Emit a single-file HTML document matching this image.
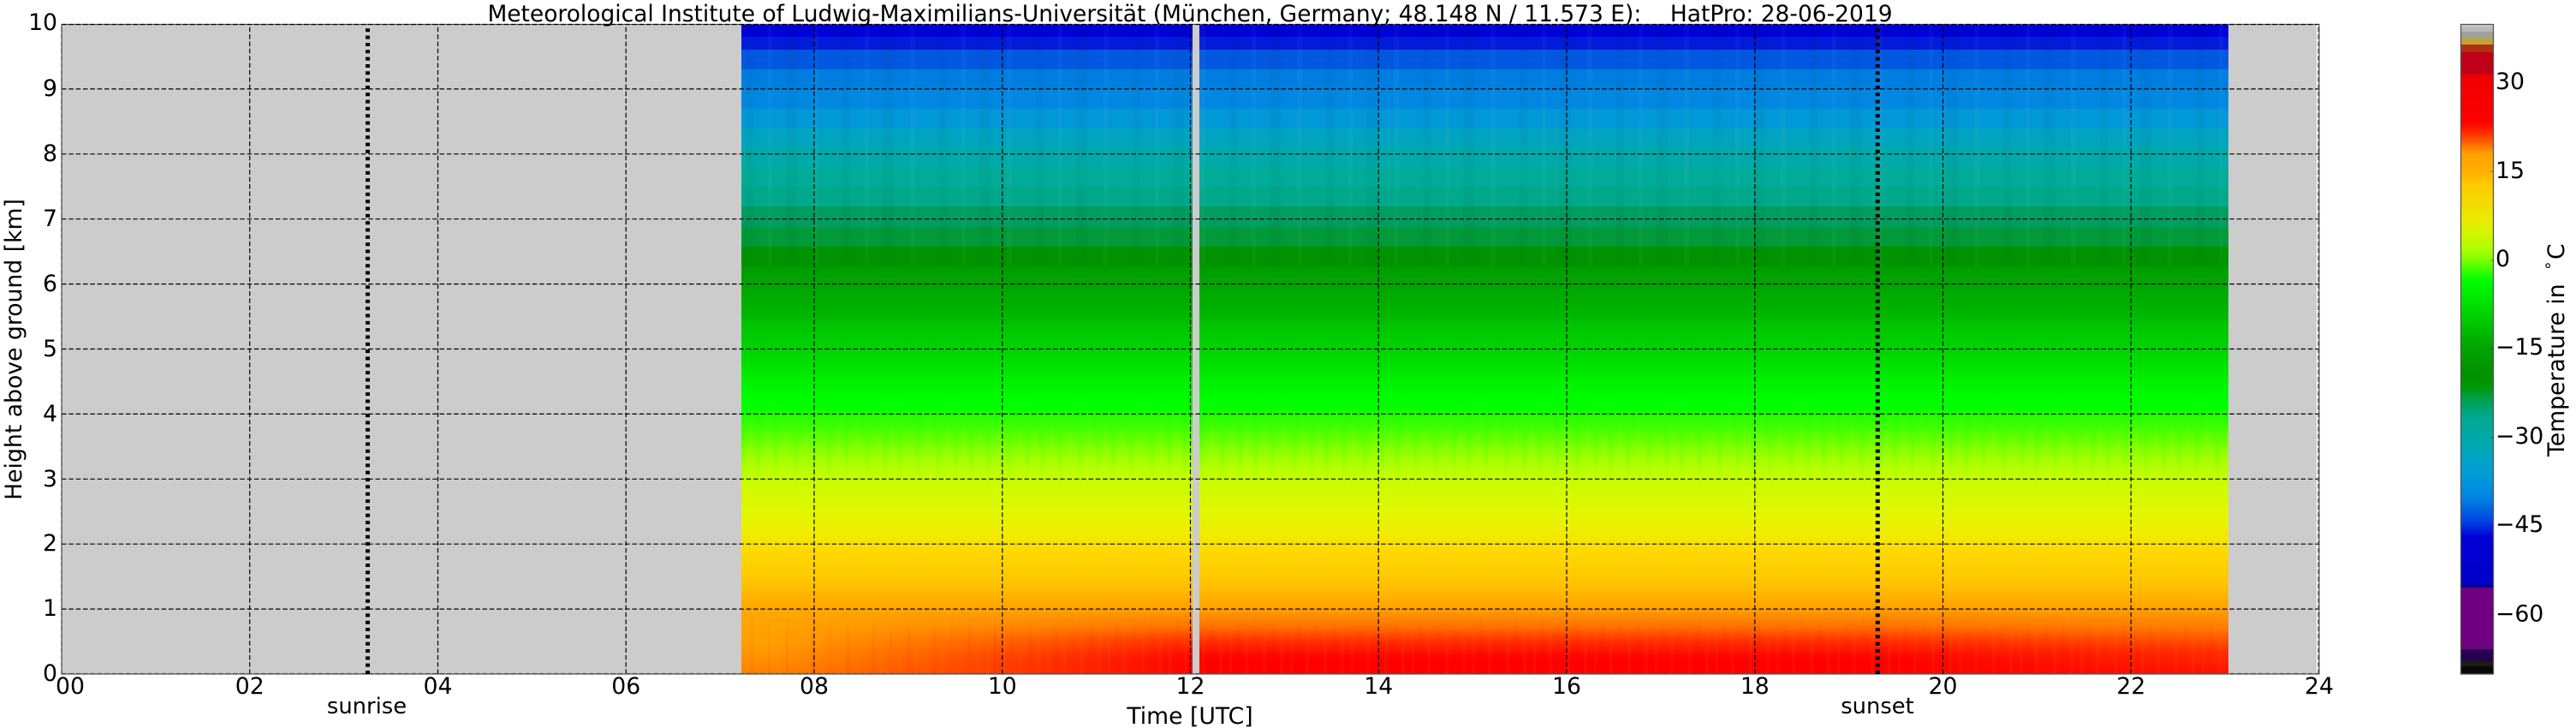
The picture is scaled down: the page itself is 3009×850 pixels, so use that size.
<!DOCTYPE html>
<html lang="en">
<head>
<meta charset="utf-8">
<title>HatPro 28-06-2019</title>
<style>
html,body{margin:0;padding:0;background:#fff;width:3009px;height:850px;overflow:hidden}
svg{display:block}
text{font-family:"DejaVu Sans",sans-serif;font-size:26.67px;fill:#000}
</style>
</head>
<body>
<svg xmlns="http://www.w3.org/2000/svg" width="3009" height="850" viewBox="0 0 3009 850">
<defs>
<linearGradient id="main" gradientUnits="userSpaceOnUse" x1="0" y1="0" x2="0" y2="1000">
<stop offset=".311" stop-color="#009c00"/><stop offset=".34" stop-color="#00a800"/><stop offset=".371" stop-color="#00b800"/><stop offset=".38" stop-color="#00c400"/><stop offset=".409" stop-color="#00d400"/><stop offset=".425" stop-color="#00e000"/><stop offset=".445" stop-color="#00f000"/><stop offset=".46" stop-color="#00fa00"/><stop offset=".475" stop-color="#00ff00"/><stop offset=".485" stop-color="#20ff00"/><stop offset=".499" stop-color="#40ff00"/><stop offset=".511" stop-color="#60ff00"/><stop offset=".522" stop-color="#80ff00"/><stop offset=".535" stop-color="#a0ff00"/><stop offset=".551" stop-color="#bcff00"/><stop offset=".565" stop-color="#ccfb00"/><stop offset=".598" stop-color="#e0f800"/><stop offset=".621" stop-color="#eeee00"/><stop offset=".641" stop-color="#fcdc00"/><stop offset=".681" stop-color="#ffc400"/><stop offset=".695" stop-color="#ffb400"/><stop offset=".711" stop-color="#ffa000"/><stop offset=".732" stop-color="#ff7000"/><stop offset=".748" stop-color="#ff3000"/><stop offset=".765" stop-color="#ff0800"/><stop offset=".772" stop-color="#ff0000"/><stop offset=".787" stop-color="#ff0000"/>
</linearGradient>
<linearGradient id="gl" gradientUnits="userSpaceOnUse" x1="0" y1="695" x2="0" y2="787">
<stop offset="0" stop-color="#ffb400"/><stop offset=".17" stop-color="#ffa800"/><stop offset=".6" stop-color="#ffa000"/><stop offset=".82" stop-color="#ff9000"/><stop offset="1" stop-color="#ff8000"/>
</linearGradient>
<linearGradient id="gr" gradientUnits="userSpaceOnUse" x1="0" y1="695" x2="0" y2="787">
<stop offset="0" stop-color="#ffb400"/><stop offset=".17" stop-color="#ffa200"/><stop offset=".43" stop-color="#ff7800"/><stop offset=".71" stop-color="#ff3000"/><stop offset="1" stop-color="#ff1000"/>
</linearGradient>
<linearGradient id="fl" gradientUnits="userSpaceOnUse" x1="900" y1="0" x2="1400" y2="0"><stop offset="0" stop-color="#fff"/><stop offset="1" stop-color="#000"/></linearGradient>
<linearGradient id="fr" gradientUnits="userSpaceOnUse" x1="2603" y1="0" x2="2200" y2="0"><stop offset="0" stop-color="#fff"/><stop offset="1" stop-color="#000"/></linearGradient>
<linearGradient id="vb" gradientUnits="userSpaceOnUse" x1="0" y1="715" x2="0" y2="787"><stop offset="0" stop-color="#000"/><stop offset=".4" stop-color="#fff"/><stop offset="1" stop-color="#fff"/></linearGradient>
<linearGradient id="vl" gradientUnits="userSpaceOnUse" x1="0" y1="480" x2="0" y2="565"><stop offset="0" stop-color="#000"/><stop offset=".35" stop-color="#fff"/><stop offset=".65" stop-color="#fff"/><stop offset="1" stop-color="#000"/></linearGradient>
<mask id="ml" maskUnits="userSpaceOnUse" x="866" y="695" width="540" height="92"><rect x="866" y="695" width="540" height="92" fill="url(#fl)"/></mask>
<mask id="mr" maskUnits="userSpaceOnUse" x="2150" y="695" width="453" height="92"><rect x="2150" y="695" width="453" height="92" fill="url(#fr)"/></mask>
<mask id="mb" maskUnits="userSpaceOnUse" x="866" y="715" width="1737" height="72"><rect x="866" y="715" width="1737" height="72" fill="url(#vb)"/></mask>
<mask id="mg" maskUnits="userSpaceOnUse" x="866" y="480" width="1737" height="85"><rect x="866" y="480" width="1737" height="85" fill="url(#vl)"/></mask>
<pattern id="n1" patternUnits="userSpaceOnUse" x="866" y="0" width="83" height="10">
<rect x="0" width="4" height="10" fill="#00ff00"/><rect x="9" width="3" height="10" fill="#c0ff00"/><rect x="17" width="5" height="10" fill="#00ff00"/><rect x="29" width="3" height="10" fill="#c0ff00"/><rect x="38" width="4" height="10" fill="#00ff00"/><rect x="50" width="4" height="10" fill="#c0ff00"/><rect x="61" width="6" height="10" fill="#10ff00"/><rect x="74" width="3" height="10" fill="#c0ff00"/>
</pattern>
<pattern id="n2" patternUnits="userSpaceOnUse" x="866" y="0" width="71" height="10">
<rect x="2" width="3" height="10" fill="#ffa000"/><rect x="11" width="3" height="10" fill="#ff0000"/><rect x="20" width="4" height="10" fill="#ffa000"/><rect x="31" width="3" height="10" fill="#ff2000"/><rect x="41" width="4" height="10" fill="#ffa000"/><rect x="52" width="3" height="10" fill="#ff0000"/><rect x="61" width="4" height="10" fill="#ffa000"/>
</pattern>
<pattern id="n3" patternUnits="userSpaceOnUse" x="866" y="0" width="113" height="10">
<rect x="5" width="9" height="10" fill="#000"/><rect x="31" width="5" height="10" fill="#fff"/><rect x="52" width="13" height="10" fill="#000"/><rect x="84" width="6" height="10" fill="#fff"/>
</pattern>
<linearGradient id="cb" gradientUnits="userSpaceOnUse" x1="0" y1="0" x2="0" y2="1000">
<stop offset=".087" stop-color="#f00000"/><stop offset=".128" stop-color="#f80000"/><stop offset=".143" stop-color="#ff0000"/><stop offset=".16" stop-color="#ff4000"/><stop offset=".179" stop-color="#ffa000"/><stop offset=".2" stop-color="#ffb000"/><stop offset=".215" stop-color="#ffc800"/><stop offset=".26" stop-color="#e8ee00"/><stop offset=".29" stop-color="#b0ff00"/><stop offset=".303" stop-color="#80ff00"/><stop offset=".327" stop-color="#00ff00"/><stop offset=".37" stop-color="#00d000"/><stop offset=".403" stop-color="#00a800"/><stop offset=".437" stop-color="#009000"/><stop offset=".45" stop-color="#009800"/><stop offset=".467" stop-color="#00a050"/><stop offset=".487" stop-color="#00a890"/><stop offset=".52" stop-color="#00a8b0"/><stop offset=".547" stop-color="#00a0d0"/><stop offset=".57" stop-color="#0090e0"/><stop offset=".583" stop-color="#0080e0"/><stop offset=".61" stop-color="#0040e0"/><stop offset=".627" stop-color="#0000d8"/><stop offset=".683" stop-color="#0000c8"/>
</linearGradient>
</defs>

<rect width="3009" height="850" fill="#fff"/>

<!-- plot background -->
<rect x="72" y="28" width="2634" height="759" fill="#cccccc"/>

<!-- heatmap -->
<g shape-rendering="crispEdges">
<rect x="866" y="28" width="1737" height="15" fill="#0000d8"/>
<rect x="866" y="43" width="1737" height="15" fill="#001cd8"/>
<rect x="866" y="58" width="1737" height="23" fill="#0058e0"/>
<rect x="866" y="81" width="1737" height="23" fill="#007edf"/>
<rect x="866" y="104" width="1737" height="23" fill="#0088e0"/>
<rect x="866" y="127" width="1737" height="23" fill="#0098d6"/>
<rect x="866" y="150" width="1737" height="22" fill="#00a4c0"/>
<rect x="866" y="172" width="1737" height="23" fill="#00aaa8"/>
<rect x="866" y="195" width="1737" height="23" fill="#00ac98"/>
<rect x="866" y="218" width="1737" height="23" fill="#00a88c"/>
<rect x="866" y="241" width="1737" height="24" fill="#009c60"/>
<rect x="866" y="265" width="1737" height="23" fill="#009a38"/>
<rect x="866" y="288" width="1737" height="23" fill="#009300"/>
<rect x="866" y="311" width="1737" height="476" fill="url(#main)"/>
<rect x="866" y="28" width="1737" height="283" fill="url(#n3)" opacity=".03"/>
<g mask="url(#mg)"><rect x="866" y="480" width="1737" height="85" fill="url(#n1)" opacity=".1"/></g>
<rect x="866" y="695" width="540" height="92" fill="url(#gl)" mask="url(#ml)"/>
<rect x="2150" y="695" width="453" height="92" fill="url(#gr)" mask="url(#mr)"/>
<g mask="url(#mb)"><rect x="866" y="715" width="1737" height="72" fill="url(#n2)" opacity=".07"/></g>
<rect x="1393" y="28" width="8" height="759" fill="#cccccc"/>
</g>

<!-- white strip on right edge -->
<rect x="2706" y="28" width="3" height="759" fill="#ffffff"/>

<!-- frame -->
<rect x="72" y="28.5" width="2637" height="758.5" fill="none" stroke="#555" stroke-width="1.2"/>

<!-- grid -->
<g stroke="#000" stroke-width="1.2" stroke-dasharray="5.5 2.83" fill="none">
<path d="M72 28.5H2709M72 103.9H2709M72 179.8H2709M72 255.7H2709M72 331.6H2709M72 407.5H2709M72 483.4H2709M72 559.3H2709M72 635.2H2709M72 711.1H2709"/>
<path d="M291.7 787V28M511.5 787V28M731.2 787V28M951 787V28M1170.8 787V28M1390.5 787V28M1610.2 787V28M1830 787V28M2049.8 787V28M2269.5 787V28M2489.2 787V28"/>
</g>
<g stroke="#555" stroke-width="1.33" stroke-dasharray="5.5 2.83" fill="none">
<path d="M72 786.5H2709M72 787V28M2708 787V28"/>
</g>

<!-- sunrise / sunset -->
<g stroke="#000" stroke-width="5" stroke-dasharray="4 4.33" fill="none">
<path d="M429.5 787V33M2193.3 787V33"/>
</g>

<!-- title -->
<text x="1390" y="25" text-anchor="middle" xml:space="preserve" style="font-size:26.48px">Meteorological Institute of Ludwig-Maximilians-Universität (München, Germany; 48.148 N / 11.573 E):    HatPro: 28-06-2019</text>

<!-- y ticks -->
<g text-anchor="end">
<text x="67" y="35">10</text>
<text x="67" y="112">9</text>
<text x="67" y="188">8</text>
<text x="67" y="264">7</text>
<text x="67" y="340">6</text>
<text x="67" y="416">5</text>
<text x="67" y="492">4</text>
<text x="67" y="568">3</text>
<text x="67" y="643">2</text>
<text x="67" y="719">1</text>
<text x="67" y="795">0</text>
</g>

<!-- x ticks -->
<g text-anchor="middle">
<text x="82" y="810">00</text>
<text x="291.7" y="810">02</text>
<text x="511.5" y="810">04</text>
<text x="731.2" y="810">06</text>
<text x="951" y="810">08</text>
<text x="1170.8" y="810">10</text>
<text x="1390.5" y="810">12</text>
<text x="1610.2" y="810">14</text>
<text x="1830" y="810">16</text>
<text x="2049.8" y="810">18</text>
<text x="2269.5" y="810">20</text>
<text x="2489.2" y="810">22</text>
<text x="2709" y="810">24</text>
<text x="428.5" y="833" style="font-size:25.8px">sunrise</text>
<text x="2193" y="833" style="font-size:25.8px">sunset</text>
<text x="1390" y="845">Time [UTC]</text>
</g>

<text transform="translate(25 408) rotate(-90)" text-anchor="middle">Height above ground [km]</text>

<!-- colorbar -->
<g shape-rendering="crispEdges">
<rect x="2875" y="28" width="38" height="4" fill="#c8c8c8"/>
<rect x="2875" y="32" width="38" height="5" fill="#b8b8b8"/>
<rect x="2875" y="37" width="38" height="6" fill="#a0a0a0"/>
<rect x="2875" y="43" width="38" height="3" fill="#a8a868"/>
<rect x="2875" y="46" width="38" height="6" fill="#c8a038"/>
<rect x="2875" y="52" width="38" height="9" fill="#b03010"/>
<rect x="2875" y="61" width="38" height="26" fill="#c00018"/>
<rect x="2875" y="87" width="38" height="596" fill="url(#cb)"/>
<rect x="2875" y="683" width="38" height="3" fill="#000088"/>
<rect x="2875" y="686" width="38" height="72" fill="#700080"/>
<rect x="2875" y="758" width="38" height="14" fill="#280050"/>
<rect x="2875" y="772" width="38" height="6" fill="#1c1c14"/>
<rect x="2875" y="778" width="38" height="9" fill="#080808"/>
</g>
<rect x="2874.5" y="28.5" width="38" height="758.5" fill="none" stroke="#555" stroke-width="1.3"/>
<g stroke="#000" stroke-opacity=".3" stroke-width="1.3">
<path d="M2909 97H2912M2909 200H2912M2909 304H2912M2909 407H2912M2909 511H2912M2909 614H2912M2909 718H2912"/>
</g>
<text x="2915" y="104">30</text>
<text x="2915" y="208">15</text>
<text x="2915" y="311">0</text>
<text x="2915" y="414">−15</text>
<text x="2915" y="518">−30</text>
<text x="2915" y="621">−45</text>
<text x="2915" y="725.5">−60</text>

<text transform="translate(2995 533) rotate(-90)">Temperature in</text>
<text transform="translate(2982 316) rotate(-90)" style="font-size:18.7px">∘</text>
<text transform="translate(2995 303) rotate(-90)">C</text>
</svg>
</body>
</html>
